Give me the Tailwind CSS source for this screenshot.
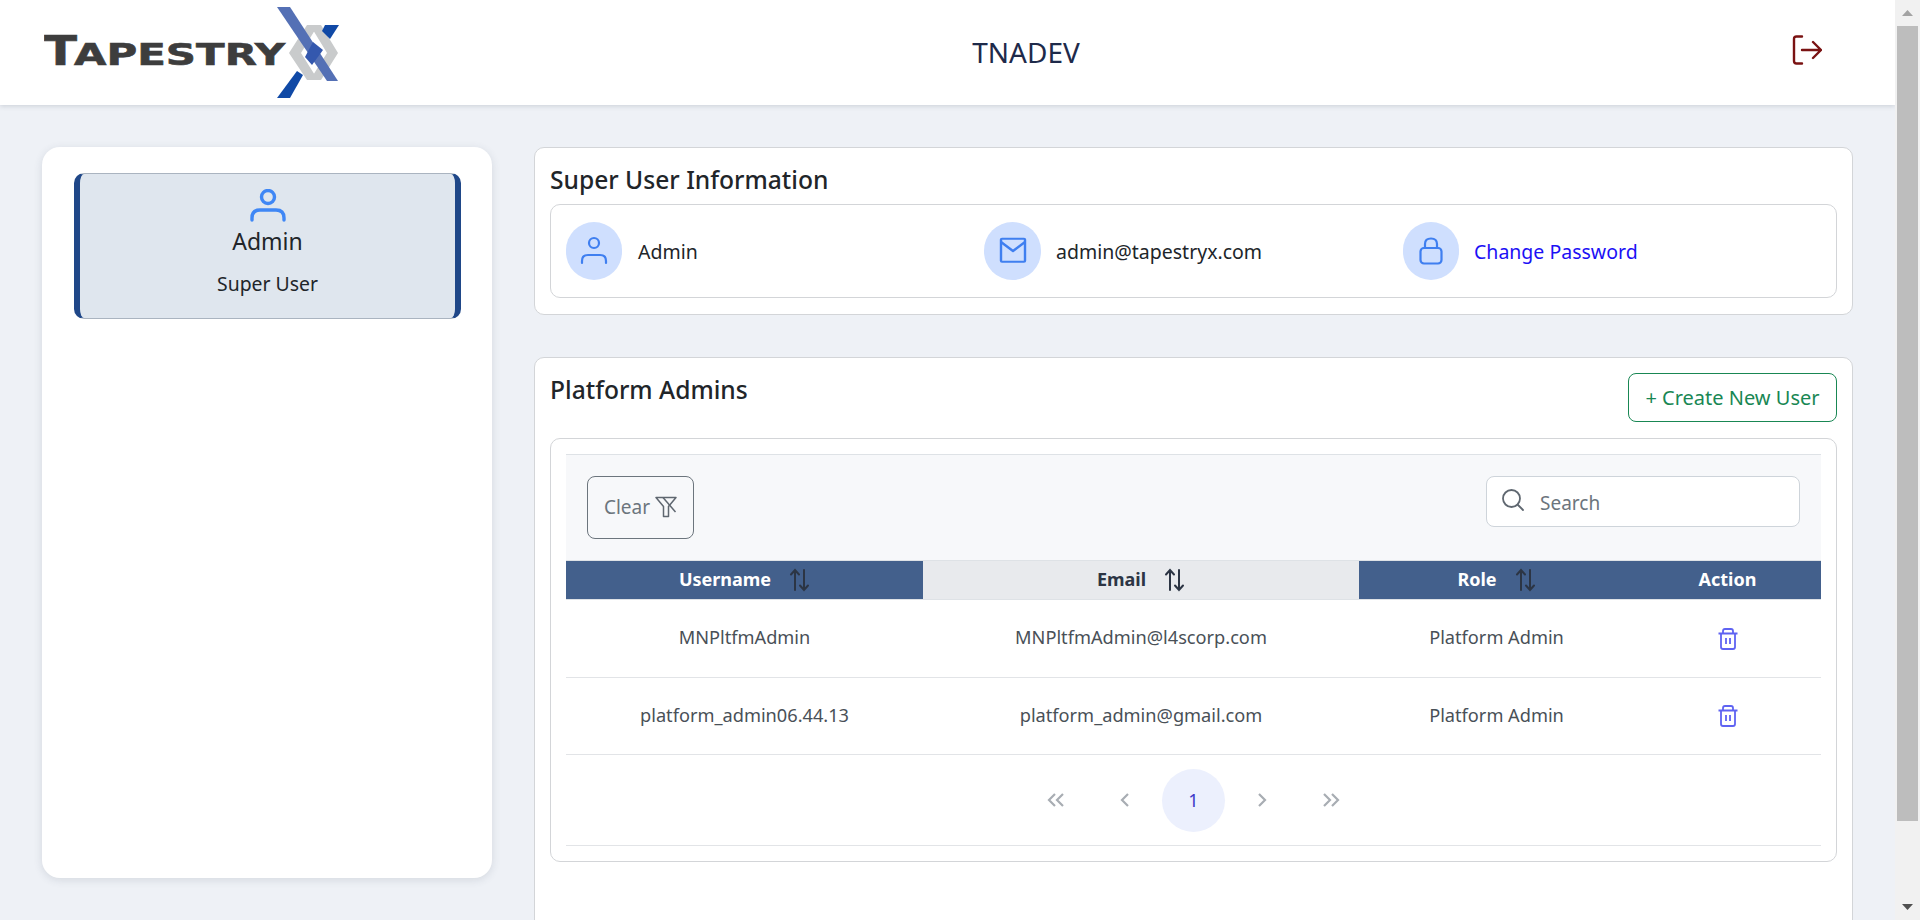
<!DOCTYPE html>
<html>
<head>
<meta charset="utf-8">
<script src="https://cdn.jsdelivr.net/npm/@tailwindcss/browser@4"></script>
</head>
<body class="h-[920px] overflow-hidden bg-[#eef1f6] font-['Noto_Sans',sans-serif] text-[#212529]">
<div class="flex h-[920px] overflow-hidden">
  <div class="flex h-[920px] w-[1895px] flex-none flex-col overflow-hidden">
    <header class="relative flex h-[105px] flex-none items-center bg-white pl-[44px] pr-[73px] shadow-[0_1px_5px_rgba(60,70,90,0.2)]">
      <svg class="h-[91px] w-[296px] flex-none" viewBox="0 0 296 91">
        <text x="0" y="58" textLength="33" lengthAdjust="spacingAndGlyphs" font-family="DejaVu Sans" font-weight="700" font-size="40" fill="#3d3d3d" stroke="#3d3d3d" stroke-width="0.600">T</text>
        <text x="30" y="58" textLength="211" lengthAdjust="spacingAndGlyphs" font-family="DejaVu Sans" font-weight="700" font-size="30" fill="#3d3d3d" stroke="#3d3d3d" stroke-width="0.600">APESTRY</text>
        <path d="M245 46L263 18H274L257 46L274 73H263Z" fill="#c9cbcc"/>
        <path d="M294 46L277 18H266L283 46L266 73H277Z" fill="#c9cbcc"/>
        <path d="M233 0H246L294 74H283Z" fill="#5470b5"/>
        <path d="M233 91H246L259 68L253 64Z" fill="#1049a6"/>
        <path d="M281 18H295L286 32L278 24Z" fill="#1049a6"/>
        <path d="M269 35L279 43L268 58L261 50Z" fill="#3458ae"/>
      </svg>
      <div class="mb-[2px] flex-1 pr-[80px] text-center text-[28px] leading-none text-[#1e2a4a]">TNADEV</div>
      <svg class="mb-[6px] h-[30px] w-[30px] flex-none" viewBox="0 0 30 30" fill="none" stroke="#7a1212" stroke-width="2.4" stroke-linecap="round" stroke-linejoin="round"><path d="M10 1.500H4.500Q2 1.500 2 4V26Q2 28.500 4.500 28.500H10"/><path d="M10 15H29M21 7L29 15L21 23"/></svg>
    </header>

    <main class="flex flex-1 gap-[42px] overflow-hidden pl-[42px] pt-[42px]">
      <aside class="h-[731px] w-[450px] flex-none rounded-[18px] bg-white px-[32px] pt-[26px] shadow-[0_2px_8px_rgba(60,70,90,0.14)]">
        <div class="flex h-[146px] w-[387px] flex-col items-center rounded-[10px] border-x-[6px] border-y border-x-[#1f4788] border-y-[#aab4c0] bg-[#dfe6ee] pt-[15px]">
          <svg class="h-[33px] w-[36px]" viewBox="0 0 36 33" fill="none" stroke="#3f87f5" stroke-width="3.400" stroke-linecap="round"><circle cx="18" cy="8" r="6.500"/><path d="M2 31V29Q2 21 10 21H26Q34 21 34 29V31"/></svg>
          <div class="mt-[3px] text-[23px] leading-[32px]">Admin</div>
          <div class="mt-[13px] text-[19.400px] leading-[27px]">Super User</div>
        </div>
      </aside>

      <div class="flex w-[1319px] flex-none flex-col gap-[42px]">
        <section class="h-[168px] flex-none rounded-[10px] border border-[#d3d5d8] bg-white px-[15px] pt-[11px]">
          <h2 class="h-[45px] text-[24.600px] font-medium leading-[42px] text-[#212529]">Super User Information</h2>
          <div class="flex h-[94px] items-center rounded-[10px] border border-[#d3d5d8] pl-[15px]">
            <div class="flex w-[418px] items-center gap-[16px]">
              <span class="flex h-[58px] w-[56px] items-center justify-center rounded-full bg-[#cfdffe]">
                <svg class="h-[32px] w-[28px]" viewBox="0 0 28 32" fill="none" stroke="#3f7ff0" stroke-width="2.200" stroke-linecap="round"><circle cx="14" cy="8" r="5"/><path d="M2 28V26Q2 20 8 20H20Q26 20 26 26V28"/></svg>
              </span>
              <span class="mt-[2px] text-[19.500px]">Admin</span>
            </div>
            <div class="flex w-[419px] items-center gap-[15px]">
              <span class="flex h-[58px] w-[57px] items-center justify-center rounded-full bg-[#cfdffe]">
                <svg class="h-[32px] w-[28px]" viewBox="0 0 28 32" fill="none" stroke="#3f7ff0" stroke-width="2.400" stroke-linejoin="round"><rect x="2" y="2" width="24" height="27" rx="1" transform="translate(0 2) scale(1 0.85)"/><path d="M2 7L14 16L26 7"/></svg>
              </span>
              <span class="mt-[2px] text-[19.500px]">admin@tapestryx.com</span>
            </div>
            <div class="flex items-center gap-[15px]">
              <span class="flex h-[58px] w-[56px] items-center justify-center rounded-full bg-[#cfdffe]">
                <svg class="h-[28px] w-[24px]" viewBox="0 0 24 28" fill="none" stroke="#3f7ff0" stroke-width="2.200"><rect x="1.500" y="11" width="21" height="15.500" rx="3.500"/><path d="M6 11V7Q6 1.500 12 1.500T18 7V11"/></svg>
              </span>
              <a class="mt-[2px] text-[19.500px] text-[#1c10f5]">Change Password</a>
            </div>
          </div>
        </section>

        <section class="h-[600px] flex-none rounded-[10px] border border-[#d3d5d8] bg-white px-[15px] pt-[15px]">
          <div class="flex h-[65px] items-start justify-between">
            <h2 class="text-[24.600px] font-medium leading-[33px]">Platform Admins</h2>
            <button class="h-[49px] w-[209px] rounded-[8px] border border-[#198754] text-[20px] leading-none text-[#198754]">+ Create New User</button>
          </div>
          <div class="h-[424px] rounded-[10px] border border-[#d3d5d8] px-[15px] pt-[15px]">
            <div class="flex h-[106px] justify-between border-t border-[#dee2e6] bg-[#f7f8fa] pl-[21px] pr-[21px] pt-[21px]">
              <button class="flex h-[63px] w-[107px] items-center justify-center gap-[5px] rounded-[8px] border border-[#6c757d] text-[19px] text-[#6c757d]">
                Clear
                <svg class="mb-[2px] h-[22px] w-[22px]" viewBox="0 0 22 22" fill="none" stroke="#5f6770" stroke-width="1.500" stroke-linejoin="round"><path d="M1 1.500H21L13.500 10.500V20.500H8.500V10.500Z"/><path d="M8 1.500L20.500 16"/></svg>
              </button>
              <div class="flex h-[51px] w-[314px] items-center rounded-[8px] border border-[#ced4da] bg-white pl-[14px]">
                <svg class="mb-[3px] h-[24px] w-[24px] flex-none" viewBox="0 0 24 24" fill="none" stroke="#5f6770" stroke-width="1.800" stroke-linecap="round"><circle cx="10.500" cy="10.500" r="8.500"/><path d="M17 17L22 22"/></svg>
                <span class="ml-[15px] mt-[4px] text-[19px] text-[#6c757d]">Search</span>
              </div>
            </div>

            <table class="w-[1255px] table-fixed border-collapse text-center text-[18.200px] text-[#495057]">
              <colgroup><col class="w-[357px]"><col class="w-[436px]"><col class="w-[275px]"><col class="w-[187px]"></colgroup>
              <thead>
                <tr class="h-[39px] border-y border-[#dee2e6] text-[18px] font-bold">
                  <th class="bg-[#43608c] font-bold text-white"><span class="inline-flex items-center gap-[18px]"><span class="mb-[2px]">Username</span> <svg class="h-[24px] w-[21px]" viewBox="0 0 21 24" fill="none" stroke="#2c3544" stroke-width="2" stroke-linecap="round"><path d="M6 22V2M2 6.500L6 2L10 6.500M15 2V22M11 17.500L15 22L19 17.500"/></svg></span></th>
                  <th class="bg-[#e8eaed] font-bold text-[#2c3544]"><span class="inline-flex items-center gap-[18px]"><span class="mb-[2px]">Email</span> <svg class="h-[24px] w-[21px]" viewBox="0 0 21 24" fill="none" stroke="#2c3544" stroke-width="2" stroke-linecap="round"><path d="M6 22V2M2 6.500L6 2L10 6.500M15 2V22M11 17.500L15 22L19 17.500"/></svg></span></th>
                  <th class="bg-[#43608c] font-bold text-white"><span class="inline-flex items-center gap-[18px]"><span class="mb-[2px]">Role</span> <svg class="h-[24px] w-[21px]" viewBox="0 0 21 24" fill="none" stroke="#2c3544" stroke-width="2" stroke-linecap="round"><path d="M6 22V2M2 6.500L6 2L10 6.500M15 2V22M11 17.500L15 22L19 17.500"/></svg></span></th>
                  <th class="bg-[#43608c] pb-[2px] font-bold text-white">Action</th>
                </tr>
              </thead>
              <tbody>
                <tr class="h-[78px] border-b border-[#e2e4e7]">
                  <td class="pb-[2px]">MNPltfmAdmin</td><td class="pb-[2px]">MNPltfmAdmin@l4scorp.com</td><td class="pb-[2px]">Platform Admin</td>
                  <td><svg class="mx-auto h-[22px] w-[20px]" viewBox="0 0 20 22" fill="none" stroke="#5f63f2" stroke-width="1.800" stroke-linejoin="round"><path d="M0.500 5.500H19.500M5 5.500V3Q5 1 7 1H13Q15 1 15 3V5.500M3 5.500V19Q3 21 5 21H15Q17 21 17 19V5.500M8 10V16M12 10V16"/></svg></td>
                </tr>
                <tr class="h-[77px] border-b border-[#e2e4e7]">
                  <td>platform_admin06.44.13</td><td>platform_admin@gmail.com</td><td>Platform Admin</td>
                  <td><svg class="mx-auto h-[22px] w-[20px]" viewBox="0 0 20 22" fill="none" stroke="#5f63f2" stroke-width="1.800" stroke-linejoin="round"><path d="M0.500 5.500H19.500M5 5.500V3Q5 1 7 1H13Q15 1 15 3V5.500M3 5.500V19Q3 21 5 21H15Q17 21 17 19V5.500M8 10V16M12 10V16"/></svg></td>
                </tr>
              </tbody>
            </table>

            <div class="flex h-[91px] items-center justify-center border-b border-[#e2e4e7]">
              <svg class="h-[14px] w-[18px]" viewBox="0 0 18 14" fill="none" stroke="#a8adb3" stroke-width="2.200"><path d="M8 1L2 7L8 13M16 1L10 7L16 13"/></svg>
              <svg class="ml-[55px] h-[14px] w-[10px]" viewBox="0 0 10 14" fill="none" stroke="#a8adb3" stroke-width="2.200"><path d="M8 1L2 7L8 13"/></svg>
              <span class="ml-[32px] flex h-[63px] w-[63px] items-center justify-center rounded-full bg-[#ecf0fd] text-[18px] text-[#3f3ac8]">1</span>
              <svg class="ml-[32px] h-[14px] w-[10px]" viewBox="0 0 10 14" fill="none" stroke="#a8adb3" stroke-width="2.200"><path d="M2 1L8 7L2 13"/></svg>
              <svg class="ml-[55px] h-[14px] w-[18px]" viewBox="0 0 18 14" fill="none" stroke="#a8adb3" stroke-width="2.200"><path d="M2 1L8 7L2 13M10 1L16 7L10 13"/></svg>
            </div>
          </div>
        </section>
      </div>
    </main>
  </div>

  <div class="flex h-[920px] w-[25px] flex-none flex-col bg-[#f1f1f1]">
    <div class="flex h-[26px] flex-none items-center justify-center">
      <svg class="h-[6px] w-[11px]" viewBox="0 0 11 6"><path d="M5.500 0L11 6H0Z" fill="#a3a3a3"/></svg>
    </div>
    <div class="ml-[2px] h-[795px] w-[21px] flex-none bg-[#bdbdbd]"></div>
    <div class="mt-auto flex h-[26px] flex-none items-center justify-center">
      <svg class="h-[6px] w-[11px]" viewBox="0 0 11 6"><path d="M0 0H11L5.500 6Z" fill="#505050"/></svg>
    </div>
  </div>
</div>
</body>
</html>
